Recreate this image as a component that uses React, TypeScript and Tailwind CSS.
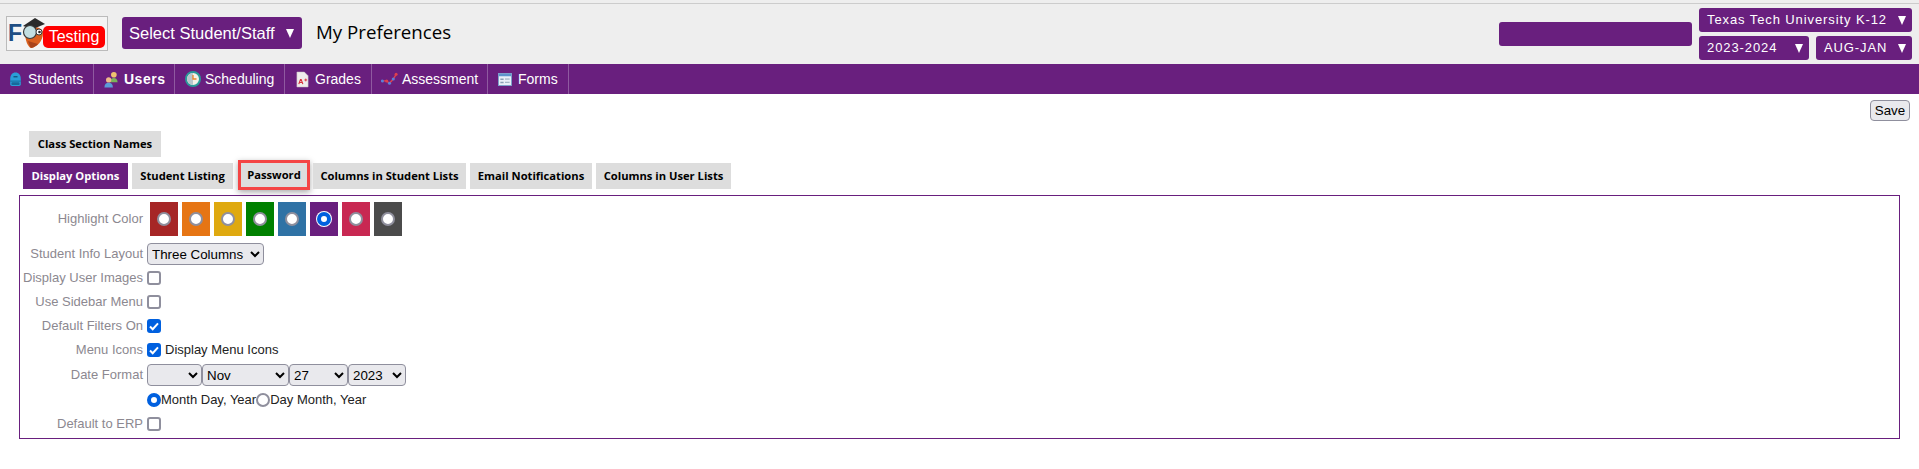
import { ChangeEvent } from 'react';

const arial = "font-['Liberation_Sans',Arial,sans-serif]";

function BackpackIcon() {
  return (
    <svg viewBox="0 0 16 18" className="w-[13px] h-[16px] mr-[6px]">
      <path d="M1.500 9c0-5 2.500-8 6.500-8s6.500 3 6.500 8v6.500a2 2 0 0 1-2 2h-9a2 2 0 0 1-2-2z" fill="#2a9fd8" />
      <rect x="1.500" y="11" width="13" height="1.200" fill="#17699b" />
      <rect x="3" y="13" width="10" height="3.500" rx="1" fill="#17699b" />
      <rect x="5.500" y="5.500" width="5" height="1.500" fill="#0e4f78" />
    </svg>
  );
}

function UsersIcon() {
  return (
    <svg viewBox="0 0 18 18" className="w-[17px] h-[17px] mr-[4px]">
      <circle cx="11.500" cy="4" r="3" fill="#eec26f" />
      <path d="M7.500 12c0-3 2-4.500 4-4.500s4 1.500 4 4.500z" fill="#7bb35a" />
      <circle cx="6" cy="9.500" r="2.800" fill="#eeb98a" />
      <path d="M1.500 17.500c0-3.500 2-5 4.500-5s4.500 1.500 4.500 5z" fill="#5b9bd8" />
    </svg>
  );
}

function ClockIcon() {
  return (
    <svg viewBox="0 0 16 16" className="w-[16px] h-[16px] mr-[4px]">
      <circle cx="8" cy="8" r="7" fill="#f4f1e8" stroke="#2a9a9a" strokeWidth="2" />
      <path d="M8 2a6 6 0 0 0 0 12z" fill="#b9c6cc" />
      <path d="M8 4v4h3.500" fill="none" stroke="#e8842a" strokeWidth="1.300" />
    </svg>
  );
}

function GradeIcon() {
  return (
    <svg viewBox="0 0 14 18" className="w-[13px] h-[17px] mr-[6px]">
      <path d="M1 1h8l4 4v12H1z" fill="#f0ecec" stroke="#c9c4c4" strokeWidth="0.600" />
      <path d="M3 14l1.800-5h.8l1.800 5M3.800 12.200h2.600" fill="none" stroke="#d8323a" strokeWidth="1.200" />
      <path d="M9 9.500h3M10.500 8v3" stroke="#d8323a" strokeWidth="1" />
    </svg>
  );
}

function ChartIcon() {
  return (
    <svg viewBox="0 0 18 14" className="w-[17px] h-[14px] mr-[4px]">
      <path d="M1.500 9l4.500 0 3 2.500 4-4.500 3-5" fill="none" stroke="#e0404e" strokeWidth="1.500" />
      <circle cx="1.500" cy="9" r="1.600" fill="#5a80d8" />
      <circle cx="6" cy="9" r="1.600" fill="#e0404e" />
      <circle cx="9" cy="11.500" r="1.600" fill="#5a80d8" />
      <circle cx="13" cy="7" r="1.600" fill="#5a80d8" />
      <circle cx="16" cy="2" r="1.600" fill="#e0404e" />
    </svg>
  );
}

function FormIcon() {
  return (
    <svg viewBox="0 0 15 14" className="w-[14px] h-[13px] mr-[6px]">
      <rect x="0.500" y="0.500" width="14" height="13" fill="#e8f0f8" stroke="#7ba3cc" />
      <rect x="1" y="1" width="13" height="2.500" fill="#5d94cc" />
      <path d="M2.500 6h3.500v1.500H2.500zM2.500 9.500h3.500V11H2.500z" fill="#8aa0b5" />
      <path d="M7.500 6.500h5M7.500 10h5" stroke="#8aa0b5" />
    </svg>
  );
}

function OwlLogo() {
  return (
    <svg viewBox="0 0 24 32" className="w-[24px] h-[32px] shrink-0 -mt-[1px]">
      <path d="M3 14C3 24 6 30 9 31C15 30 21 24 21 16C21 11 15 10 11 10Z" fill="#d9601f" />
      <path d="M6 24c1 3 2 6 3 7 3-.5 5-2 7-4z" fill="#a8431a" />
      <path d="M1 9L13 1L23 7L11 12Z" fill="#2b2b2b" />
      <circle cx="8" cy="15" r="6.500" fill="#c2dfe2" stroke="#3a3a3a" strokeWidth="1.200" />
      <circle cx="17" cy="15" r="3" fill="#fff" stroke="#3a3a3a" strokeWidth="1" />
      <circle cx="17.500" cy="15" r="1.300" fill="#222" />
    </svg>
  );
}

function Caret() {
  return (
    <svg viewBox="0 0 8 9" className="w-[8px] h-[9px] shrink-0">
      <path d="M0 0h8L4 9z" fill="#fff" />
    </svg>
  );
}

function PurpleDrop({ label, className }: { label: string; className: string }) {
  return (
    <div className={`flex items-center justify-between h-[24px] pl-2 pr-[6px] rounded-[3px] bg-[#691f7e] text-white text-[13px] tracking-[0.9px] ${className}`}>
      <span>{label}</span>
      <Caret />
    </div>
  );
}

function Check({ checked = false }: { checked?: boolean }) {
  return (
    <span className={`relative inline-flex w-[14px] h-[14px] shrink-0 rounded-[3px] ${checked ? 'bg-[#0060df]' : 'border-2 border-[#8f8f9d] bg-white'}`}>
      <input type="checkbox" defaultChecked={checked} onChange={(_e: ChangeEvent<HTMLInputElement>) => {}} className="absolute inset-0 opacity-0" />
      {checked && (
        <svg viewBox="0 0 14 14" className="w-[14px] h-[14px]">
          <path d="M3 7.500l2.700 2.700L11 4.300" fill="none" stroke="#fff" strokeWidth="2" />
        </svg>
      )}
    </span>
  );
}

function Radio({ checked = false, swatch = false }: { checked?: boolean; swatch?: boolean }) {
  const ring = checked ? 'border-[4px] border-[#0060df]' : 'border-2 border-[#8f8f9d]';
  const halo = checked && swatch ? 'shadow-[0_0_0_1px_#fff]' : '';
  return <span className={`block w-[14px] h-[14px] shrink-0 rounded-full bg-white ${ring} ${halo}`} />;
}

function Select({ value, className }: { value: string; className: string }) {
  return (
    <select defaultValue={value} className={`h-[22px] bg-[#e9e9ed] border border-[#8f8f9d] rounded-[4px] text-[13.33px] text-black ${className}`}>
      <option value={value}>{value}</option>
    </select>
  );
}

function Row({ label, className = 'h-6', children }: { label?: string; className?: string; children: React.ReactNode }) {
  return (
    <div className={`flex items-center ${className}`}>
      <div className="w-[123px] shrink-0 text-right text-[13px] text-[#8c8890] whitespace-nowrap">{label}</div>
      <div className="flex items-center pl-1">{children}</div>
    </div>
  );
}

const menu = [
  { label: 'Students', icon: <BackpackIcon />, width: 'w-[94px]', pad: 'pl-[9px]' },
  { label: 'Users', icon: <UsersIcon />, width: 'w-[81px]', pad: 'pl-[9px]', bold: true },
  { label: 'Scheduling', icon: <ClockIcon />, width: 'w-[110px]', pad: 'pl-[10px]' },
  { label: 'Grades', icon: <GradeIcon />, width: 'w-[87px]', pad: 'pl-[11px]' },
  { label: 'Assessment', icon: <ChartIcon />, width: 'w-[116px]', pad: 'pl-[9px]' },
  { label: 'Forms', icon: <FormIcon />, width: 'w-[81px]', pad: 'pl-[10px]' },
];

const swatches = ['#a62626', '#e67514', '#dfa90f', '#008000', '#2f72a5', '#691f7e', '#c82852', '#4b4b4b'];

const tabClass = "flex items-center justify-center h-[26px] bg-[#dddddd] text-[11.2px] font-bold text-black font-['Open_Sans',sans-serif]";

export default function App() {
  return (
    <div className={`min-h-[469px] bg-white ${arial}`}>
      {/* Top bar */}
      <div className="h-[3px] bg-[#eeeeee]" />
      <header className="flex items-start h-[61px] bg-[#eeeeee] border-t border-[#cccccc]">
        <div className="relative flex items-center w-[102px] h-[35px] mt-[12px] ml-[6px] border border-[#bbbbbb] bg-[#f4f4f4] overflow-hidden">
          <span className="pl-[1px] w-[15px] text-[23px] leading-none font-bold text-[#1f4e84]">F</span>
          <OwlLogo />
          <span className="absolute left-[36px] top-[9px] w-[62px] h-[22px] rounded-[5px] bg-[#ff0000] text-white text-[16px] leading-[22px] text-center">Testing</span>
        </div>
        <div className="flex items-center justify-between w-[180px] h-[32px] mt-[13px] ml-[14px] pl-[7px] pr-[8px] rounded-[3px] bg-[#691f7e] text-white text-[16.5px]">
          <span>Select Student/Staff</span>
          <Caret />
        </div>
        <h1 className="mt-[14px] ml-[14px] text-[18.7px] leading-[28px] text-black font-['Open_Sans',sans-serif]">My Preferences</h1>
        <div className="flex items-start ml-auto mr-[7px]">
          <div className="w-[193px] h-[24px] mt-[18px] rounded-[3px] bg-[#691f7e]" />
          <div className="flex flex-col gap-[4px] w-[213px] ml-[7px] mt-[4px]">
            <PurpleDrop label="Texas Tech University K-12" className="w-full" />
            <div className="flex justify-between">
              <PurpleDrop label="2023-2024" className="w-[110px]" />
              <PurpleDrop label="AUG-JAN" className="w-[96px]" />
            </div>
          </div>
        </div>
      </header>

      {/* Menu */}
      <nav className="flex h-[30px] bg-[#691f7e] text-white text-[14px]">
        {menu.map((item) => (
          <div key={item.label} className={`flex items-center ${item.width} ${item.pad} border-r border-[#8f5aa0] ${item.bold ? 'font-bold tracking-[0.5px]' : ''}`}>
            {item.icon}
            <span>{item.label}</span>
          </div>
        ))}
      </nav>

      <main className="flex flex-col">
        <div className="flex justify-end pt-[6px] pr-[9px]">
          <button className="w-[40px] h-[21px] bg-[#e9e9ed] border border-[#8f8f9d] rounded-[4px] text-[13.33px] text-black">Save</button>
        </div>

        <div className={`${tabClass} w-[132px] mt-[10px] ml-[29px]`}>Class Section Names</div>

        {/* Tabs */}
        <div className="flex mt-[6px] ml-[23px]">
          <div className={`${tabClass} w-[105px] !bg-[#691f7e] !text-white`}>Display Options</div>
          <div className={`${tabClass} w-[101px] ml-1`}>Student Listing</div>
          <div className={`${tabClass} !h-[24px] w-[66px] ml-2 outline-[3px] outline-solid outline-[#f44444] shadow-[0_2px_6px_3px_rgba(0,0,0,0.35)]`}>Password</div>
          <div className={`${tabClass} w-[153px] ml-[6px]`}>Columns in Student Lists</div>
          <div className={`${tabClass} w-[122px] ml-1`}>Email Notifications</div>
          <div className={`${tabClass} w-[135px] ml-1`}>Columns in User Lists</div>
        </div>

        {/* Display options panel */}
        <section className="flex flex-col mt-[6px] mx-[19px] pt-[6px] h-[244px] border border-[#691f7e]">
          <Row label="Highlight Color" className="h-[34px]">
            <div className="flex gap-1 pl-[3px]">
              {swatches.map((color, index) => (
                <div key={color} className="flex items-start justify-center w-[28px] h-[34px] pt-[10px]" style={{ backgroundColor: color }}>
                  <Radio swatch checked={index === 5} />
                </div>
              ))}
            </div>
          </Row>
          <div className="h-[6px]" />
          <Row label="Student Info Layout">
            <Select value="Three Columns" className="w-[117px]" />
          </Row>
          <Row label="Display User Images"><Check /></Row>
          <Row label="Use Sidebar Menu"><Check /></Row>
          <Row label="Default Filters On"><Check checked /></Row>
          <Row label="Menu Icons">
            <Check checked />
            <span className="ml-1 text-[13px] text-[#222222]">Display Menu Icons</span>
          </Row>
          <Row label="Date Format" className="h-[26px]">
            <Select value=" " className="w-[55px]" />
            <Select value="Nov" className="w-[87px]" />
            <Select value="27" className="w-[59px]" />
            <Select value="2023" className="w-[58px]" />
          </Row>
          <Row>
            <Radio checked />
            <span className="text-[13px] text-[#222222]">Month Day, Year</span>
            <Radio />
            <span className="text-[13px] text-[#222222]">Day Month, Year</span>
          </Row>
          <Row label="Default to ERP"><Check /></Row>
        </section>
      </main>
    </div>
  );
}
